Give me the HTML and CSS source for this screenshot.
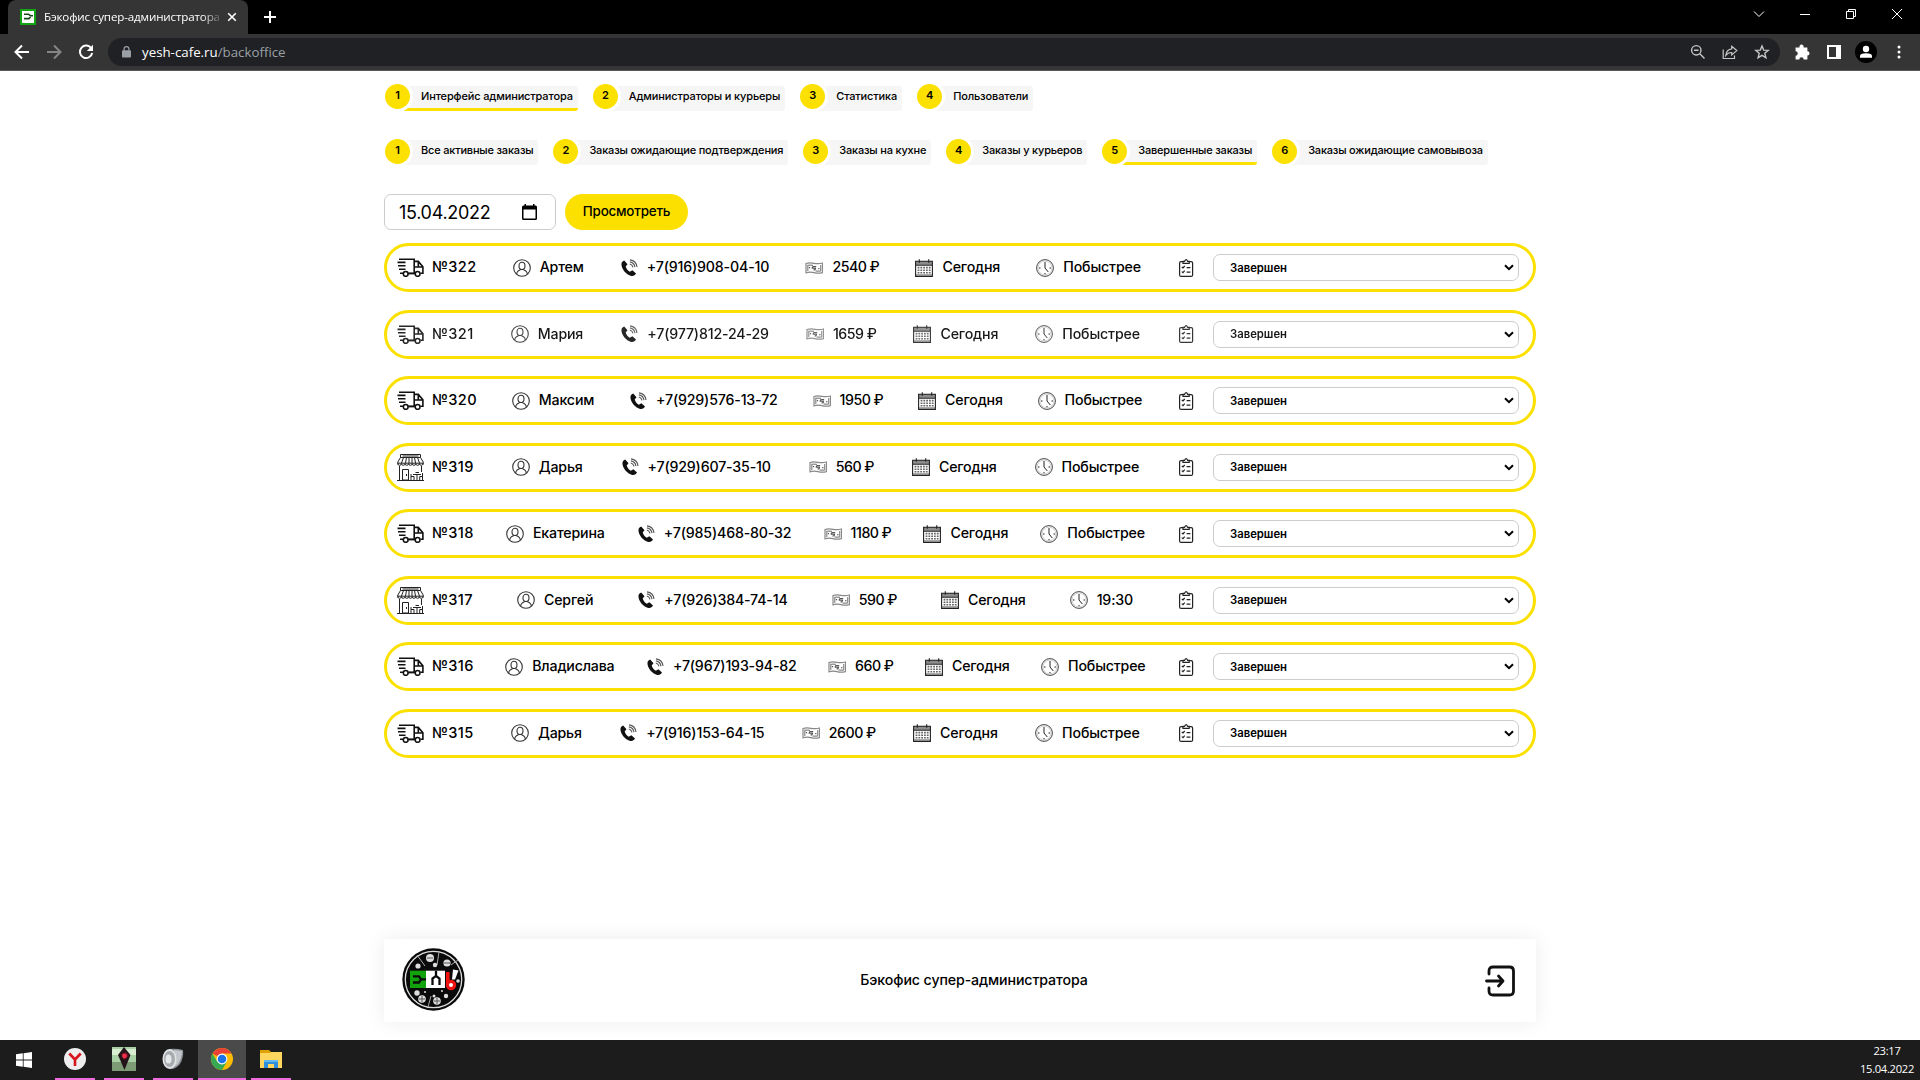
FILE: index.html
```html
<!DOCTYPE html>
<html lang="ru">
<head>
<meta charset="utf-8">
<title>Бэкофис супер-администратора</title>
<link rel="stylesheet" href="styles.css">
</head>
<body>
<svg class="sprite" aria-hidden="true">
  <symbol id="truck" viewBox="0 0 27 19"><g fill="none" stroke="#111" stroke-width="1.6"><path d="M2 1.2H17.2V15.2H11.5M6.5 15.2H3M17.2 3.4H21.3L25.9 8.8V15.2H23.5M17.2 15.2H17M17.6 9H25.5M21.3 3.5V8.8"/><path d="M0.5 4.4H8.5M1 7.8H8.5M2 11.2H8.5"/><circle cx="8.7" cy="15.9" r="2.4" fill="#fff"/><circle cx="20.6" cy="15.9" r="2.4" fill="#fff"/><path d="M11.2 15.6H18.2"/></g></symbol>
  <symbol id="shop" viewBox="0 0 27 27"><g fill="none" stroke="#222" stroke-width="1"><path d="M3.5 .5H23.5V3.5H3.5ZM3.5 3.5L.8 8V10.5M23.5 3.5L26.2 8V10.5M0 26.5H27M2.5 12V26M24.5 12V18M5.5 15.5H11.5V26H5.5ZM9.5 20V22M6.5 3.5L4.5 9M9.5 3.5L8.5 9M12 3.5V9M15 3.5V9M17.5 3.5L18.5 9M20.5 3.5L22.5 9M.8 9.2H26.2M5.5 2H21.5"/><path d="M.8 9.5a1.8 1.8 0 0 0 3.6 0a1.8 1.8 0 0 0 3.6 0a1.8 1.8 0 0 0 3.6 0a1.8 1.8 0 0 0 3.6 0a1.8 1.8 0 0 0 3.6 0a1.8 1.8 0 0 0 3.6 0a1.8 1.8 0 0 0 3.6 0"/><path d="M14 20V26M14 22.5H17V26M25.5 19V26M25.5 22.5H22.7V26M16 20.5H24M20 20.5V26M18.5 18.5H22"/></g></symbol>
  <symbol id="person" viewBox="0 0 18 18"><g fill="none" stroke="#333" stroke-width="1.1"><circle cx="9" cy="9" r="8.3"/><ellipse cx="9" cy="6.9" rx="3" ry="3.6"/><path d="M3.7 15C3.8 12.2 5.5 11.5 7.5 10.8M14.3 15C14.2 12.2 12.5 11.5 10.5 10.8"/></g></symbol>
  <symbol id="phone" viewBox="0 0 18 18"><path fill="#111" d="M4.2 1.6C2.2 2.3 1 4 1.6 6.7C2.7 11.2 6.2 15.2 10.5 16.7C13 17.4 15 16.6 16 14.5L12.4 11.2L9.8 12.8C7.6 11.6 6.3 9.8 5.7 7.6L7.5 5.2Z"/><path fill="none" stroke="#555" stroke-width="1.1" d="M9.8 5C11.6 5.4 12.6 6.5 13 8.3M9.9 2.9C12.7 3.4 14.5 5.2 15 8.1M10 .9C14 1.4 16.5 3.9 17 8"/></symbol>
  <symbol id="money" viewBox="0 0 18 12"><g fill="none" stroke="#888" stroke-width="1.2"><path d="M1 11.5V1.5Q4.5 .4 9 1.3T17.5 1V10.6Q13 11.8 9 10.6T1 10.8"/><path d="M2.8 9V3.3Q5 2.8 8 3.4M15.7 3V8.8Q13 9.4 10.5 8.8"/><path stroke="#555" d="M11.2 4.5H8.5Q7.3 4.5 7.3 6.2H10.5Q10.5 8 8.5 8M4.5 5V6.2M13.8 6V7.2"/></g></symbol>
  <symbol id="cal" viewBox="0 0 18 18"><path fill="#8c8c8c" d="M.6 2H17.4V6H.6Z"/><g fill="none" stroke="#222" stroke-width="1.1"><path d="M.6 2.2H17.4V17.4H.6ZM.6 6.3H17.4M4.3 .2V3.8M13.7 .2V3.8"/></g><path stroke="#666" stroke-width="1.6" stroke-dasharray="1.8 1" d="M2.6 8.6H15.6M2.6 11.2H15.6M2.6 13.8H15.6"/><path stroke="#555" stroke-width="1" d="M1 16H17"/></symbol>
  <symbol id="clock" viewBox="0 0 18 18"><g fill="none" stroke="#444" stroke-width="1"><circle cx="9" cy="9" r="8.4"/><circle cx="9" cy="9" r="7" stroke="#aaa" stroke-width=".6"/><path stroke="#222" d="M9 3V9L12.3 13M9 14V15.3M3 9H4.5M13.5 9H15"/></g></symbol>
  <symbol id="list" viewBox="0 0 18 18"><g fill="none" stroke="#222" stroke-width="1.2"><rect x="2.6" y="2.6" width="13" height="14.8" rx="1.5"/><path fill="#fff" d="M6 4.4V2.3H7.6Q9.1-.9 10.6 2.3H12.2V4.4Z"/><path d="M4.8 8L6 9L7.7 7M4.8 12.6L6 13.6L7.7 11.6M9.6 8.6H13.4M9.6 13.2H13.4"/></g></symbol>
</svg>

<header class="browser">
  <div class="tabs">
    <div class="tab">
      <svg class="favicon" viewBox="0 0 16 16"><path fill="#12a312" d="M0 0H16V16H0Z"/><path fill="#fff" d="M2 2H14V14H2Z"/><path fill="none" stroke="#164a16" stroke-width="1.6" d="M4 5.2H8.5L10.5 6.7H13M4 9.6H9L10.5 8"/></svg>
      <span class="tab-title">Бэкофис супер-администратора</span>
      <svg class="tab-close" viewBox="0 0 10 10"><path d="M1.2 1.2L8.8 8.8M8.8 1.2L1.2 8.8"/></svg>
    </div>
    <svg class="plus" viewBox="0 0 12 12"><path d="M6 0V12M0 6H12"/></svg>
    <div class="window-buttons">
      <svg viewBox="0 0 12 12"><path d="M1 3.5L6 8.5L11 3.5"/></svg>
      <svg viewBox="0 0 12 12"><path d="M1 6.5H11"/></svg>
      <svg viewBox="0 0 12 12"><path d="M1.5 3.5H8.5V10.5H1.5ZM3.5 3.5V1.5H10.5V8.5H8.5"/></svg>
      <svg viewBox="0 0 12 12"><path d="M1 1L11 11M11 1L1 11"/></svg>
    </div>
  </div>
  <div class="toolbar">
    <svg class="tool" viewBox="0 0 16 16"><path d="M15 8H2M8 1.5L1.5 8L8 14.5"/></svg>
    <svg class="tool dim" viewBox="0 0 16 16"><path d="M1 8H14M8 1.5L14.5 8L8 14.5"/></svg>
    <svg class="tool" viewBox="0 0 16 16"><path d="M13.4 4.5A6.2 6.2 0 1 0 14.2 9"/><path fill="#fff" stroke="none" d="M15 .8V7H8.8Z"/></svg>
    <div class="omnibox">
      <svg class="lock" viewBox="0 0 10 13"><path fill="#9aa0a6" d="M1 4.6H9Q10 4.6 10 5.6V11.6Q10 12.6 9 12.6H1Q0 12.6 0 11.6V5.6Q0 4.6 1 4.6Z"/><path fill="none" stroke="#9aa0a6" stroke-width="1.3" d="M2.3 5V3.3a2.7 2.7 0 0 1 5.4 0V5"/></svg>
      <span class="url">yesh-cafe.ru<i>/backoffice</i></span>
      <svg class="obi" viewBox="0 0 16 16"><circle cx="6.3" cy="6.3" r="4.7"/><path d="M9.8 9.8L14.5 14.5M4 6.3H8.6"/></svg>
      <svg class="obi" viewBox="0 0 16 16"><path stroke-width="1.2" d="M1.2 5.5V14.5H12.5V11.5M9.7 2.2L14.8 6.6L9.7 11V8.5Q6 8.3 3.8 11.3Q4.5 5.4 9.7 4.8Z"/></svg>
      <svg class="obi" viewBox="0 0 16 16"><path d="M8 2L9.7 6.1L14.2 6.4L10.8 9.3L11.9 13.7L8 11.3L4.1 13.7L5.2 9.3L1.8 6.4L6.3 6.1Z"/></svg>
    </div>
    <svg class="ext" viewBox="0 0 16 16"><path fill="#fff" d="M1.5 3.2H5.2A2 2 0 1 1 9 3.2H12.6V6.9A2 2 0 1 1 12.6 10.9V14.6H9.1A2 2 0 0 0 5 14.6H1.5V11A2 2 0 0 0 1.5 6.9Z"/></svg>
    <svg class="side" viewBox="0 0 14 14"><path fill="#fff" fill-rule="evenodd" d="M0 0H14V14H0ZM2 2V12H9V2Z"/></svg>
    <svg class="avatar" viewBox="0 0 22 22"><circle cx="11" cy="11" r="11"/><circle cx="11" cy="8" r="3.2" fill="#fff"/><path fill="#fff" d="M5 16.8V15Q5 12.3 11 12.3T17 15V16.8Z"/></svg>
    <svg class="dots" viewBox="0 0 4 14"><circle cx="2" cy="2" r="1.5"/><circle cx="2" cy="7" r="1.5"/><circle cx="2" cy="12" r="1.5"/></svg>
  </div>
</header>

<main class="page">
  <nav class="nav">
    <a class="step active"><b>1</b><span>Интерфейс администратора</span></a>
    <a class="step"><b>2</b><span>Администраторы и курьеры</span></a>
    <a class="step"><b>3</b><span>Статистика</span></a>
    <a class="step"><b>4</b><span>Пользователи</span></a>
  </nav>
  <nav class="nav second">
    <a class="step"><b>1</b><span>Все активные заказы</span></a>
    <a class="step"><b>2</b><span>Заказы ожидающие подтверждения</span></a>
    <a class="step"><b>3</b><span>Заказы на кухне</span></a>
    <a class="step"><b>4</b><span>Заказы у курьеров</span></a>
    <a class="step active"><b>5</b><span>Завершенные заказы</span></a>
    <a class="step"><b>6</b><span>Заказы ожидающие самовывоза</span></a>
  </nav>
  <div class="filter">
    <div class="date"><span>15.04.2022</span><svg viewBox="0 0 15 16"><path fill="#000" fill-rule="evenodd" d="M2.5 0H4V1.5H11V0H12.5V1.5H13.5Q15 1.5 15 3V14.5Q15 16 13.5 16H1.5Q0 16 0 14.5V3Q0 1.5 1.5 1.5H2.5ZM1.5 5.5V14.5H13.5V5.5Z"/></svg></div>
    <button class="view">Просмотреть</button>
  </div>
  <section class="orders">
    <article class="order"><div class="info">
      <div class="cell num"><svg class="truck"><use href="#truck"/></svg><span>№322</span></div>
      <div class="cell"><svg><use href="#person"/></svg><span>Артем</span></div>
      <div class="cell tel"><svg><use href="#phone"/></svg><span>+7(916)908-04-10</span></div>
      <div class="cell sum"><svg><use href="#money"/></svg><span>2540 ₽</span></div>
      <div class="cell"><svg><use href="#cal"/></svg><span>Сегодня</span></div>
      <div class="cell"><svg><use href="#clock"/></svg><span>Побыстрее</span></div>
      <div class="cell"><svg><use href="#list"/></svg></div></div>
      <div class="status"><span>Завершен</span><svg viewBox="0 0 10 7"><path d="M1 1.2L5 5.2L9 1.2"/></svg></div>
    </article>
    <article class="order soft"><div class="info">
      <div class="cell num"><svg class="truck"><use href="#truck"/></svg><span>№321</span></div>
      <div class="cell"><svg><use href="#person"/></svg><span>Мария</span></div>
      <div class="cell tel"><svg><use href="#phone"/></svg><span>+7(977)812-24-29</span></div>
      <div class="cell sum"><svg><use href="#money"/></svg><span>1659 ₽</span></div>
      <div class="cell"><svg><use href="#cal"/></svg><span>Сегодня</span></div>
      <div class="cell"><svg><use href="#clock"/></svg><span>Побыстрее</span></div>
      <div class="cell"><svg><use href="#list"/></svg></div></div>
      <div class="status"><span>Завершен</span><svg viewBox="0 0 10 7"><path d="M1 1.2L5 5.2L9 1.2"/></svg></div>
    </article>
    <article class="order"><div class="info">
      <div class="cell num"><svg class="truck"><use href="#truck"/></svg><span>№320</span></div>
      <div class="cell"><svg><use href="#person"/></svg><span>Максим</span></div>
      <div class="cell tel"><svg><use href="#phone"/></svg><span>+7(929)576-13-72</span></div>
      <div class="cell sum"><svg><use href="#money"/></svg><span>1950 ₽</span></div>
      <div class="cell"><svg><use href="#cal"/></svg><span>Сегодня</span></div>
      <div class="cell"><svg><use href="#clock"/></svg><span>Побыстрее</span></div>
      <div class="cell"><svg><use href="#list"/></svg></div></div>
      <div class="status"><span>Завершен</span><svg viewBox="0 0 10 7"><path d="M1 1.2L5 5.2L9 1.2"/></svg></div>
    </article>
    <article class="order"><div class="info">
      <div class="cell num"><svg class="shop"><use href="#shop"/></svg><span>№319</span></div>
      <div class="cell"><svg><use href="#person"/></svg><span>Дарья</span></div>
      <div class="cell tel"><svg><use href="#phone"/></svg><span>+7(929)607-35-10</span></div>
      <div class="cell sum"><svg><use href="#money"/></svg><span>560 ₽</span></div>
      <div class="cell"><svg><use href="#cal"/></svg><span>Сегодня</span></div>
      <div class="cell"><svg><use href="#clock"/></svg><span>Побыстрее</span></div>
      <div class="cell"><svg><use href="#list"/></svg></div></div>
      <div class="status"><span>Завершен</span><svg viewBox="0 0 10 7"><path d="M1 1.2L5 5.2L9 1.2"/></svg></div>
    </article>
    <article class="order"><div class="info">
      <div class="cell num"><svg class="truck"><use href="#truck"/></svg><span>№318</span></div>
      <div class="cell"><svg><use href="#person"/></svg><span>Екатерина</span></div>
      <div class="cell tel"><svg><use href="#phone"/></svg><span>+7(985)468-80-32</span></div>
      <div class="cell sum"><svg><use href="#money"/></svg><span>1180 ₽</span></div>
      <div class="cell"><svg><use href="#cal"/></svg><span>Сегодня</span></div>
      <div class="cell"><svg><use href="#clock"/></svg><span>Побыстрее</span></div>
      <div class="cell"><svg><use href="#list"/></svg></div></div>
      <div class="status"><span>Завершен</span><svg viewBox="0 0 10 7"><path d="M1 1.2L5 5.2L9 1.2"/></svg></div>
    </article>
    <article class="order"><div class="info">
      <div class="cell num"><svg class="shop"><use href="#shop"/></svg><span>№317</span></div>
      <div class="cell"><svg><use href="#person"/></svg><span>Сергей</span></div>
      <div class="cell tel"><svg><use href="#phone"/></svg><span>+7(926)384-74-14</span></div>
      <div class="cell sum"><svg><use href="#money"/></svg><span>590 ₽</span></div>
      <div class="cell"><svg><use href="#cal"/></svg><span>Сегодня</span></div>
      <div class="cell"><svg><use href="#clock"/></svg><span>19:30</span></div>
      <div class="cell"><svg><use href="#list"/></svg></div></div>
      <div class="status"><span>Завершен</span><svg viewBox="0 0 10 7"><path d="M1 1.2L5 5.2L9 1.2"/></svg></div>
    </article>
    <article class="order"><div class="info">
      <div class="cell num"><svg class="truck"><use href="#truck"/></svg><span>№316</span></div>
      <div class="cell"><svg><use href="#person"/></svg><span>Владислава</span></div>
      <div class="cell tel"><svg><use href="#phone"/></svg><span>+7(967)193-94-82</span></div>
      <div class="cell sum"><svg><use href="#money"/></svg><span>660 ₽</span></div>
      <div class="cell"><svg><use href="#cal"/></svg><span>Сегодня</span></div>
      <div class="cell"><svg><use href="#clock"/></svg><span>Побыстрее</span></div>
      <div class="cell"><svg><use href="#list"/></svg></div></div>
      <div class="status"><span>Завершен</span><svg viewBox="0 0 10 7"><path d="M1 1.2L5 5.2L9 1.2"/></svg></div>
    </article>
    <article class="order"><div class="info">
      <div class="cell num"><svg class="truck"><use href="#truck"/></svg><span>№315</span></div>
      <div class="cell"><svg><use href="#person"/></svg><span>Дарья</span></div>
      <div class="cell tel"><svg><use href="#phone"/></svg><span>+7(916)153-64-15</span></div>
      <div class="cell sum"><svg><use href="#money"/></svg><span>2600 ₽</span></div>
      <div class="cell"><svg><use href="#cal"/></svg><span>Сегодня</span></div>
      <div class="cell"><svg><use href="#clock"/></svg><span>Побыстрее</span></div>
      <div class="cell"><svg><use href="#list"/></svg></div></div>
      <div class="status"><span>Завершен</span><svg viewBox="0 0 10 7"><path d="M1 1.2L5 5.2L9 1.2"/></svg></div>
    </article>
  </section>
  <footer class="card">
    <svg class="logo" viewBox="0 0 63 63"><circle cx="31.5" cy="31.5" r="31.2" fill="#0a0a0a"/><circle cx="31.5" cy="31.5" r="28.2" fill="none" stroke="#ddd" stroke-width="1.3"/>
      <g stroke="#aaa" stroke-width="1"><path d="M15 7L23 18M37 4L35 17M29 48L26 59M49 17L56 12"/></g>
      <g fill="#ddd"><circle cx="28" cy="10" r="4"/><circle cx="45" cy="15" r="3.6"/><circle cx="16" cy="18" r="2.6"/><circle cx="33" cy="17" r="2.2"/><circle cx="20" cy="51" r="3.8"/><circle cx="35" cy="53" r="3.8"/><circle cx="15" cy="45" r="2.7"/><circle cx="32" cy="48" r="1.5"/><circle cx="44" cy="48" r="2.2"/><circle cx="56" cy="33" r="1.8"/><circle cx="23" cy="44" r="1"/><circle cx="40" cy="43" r="1"/></g>
      <g stroke="#555" stroke-width="1"><path d="M25 10H31M42 15H48M17 51H23M32 53H38M35 50V56M20 48V54"/></g>
      <path fill="#12a30c" d="M8 22.7H24V40H8Z"/><path fill="#fff" d="M24 22.7H43V40H24Z"/>
      <path fill="none" stroke="#0a0a0a" stroke-width="2.3" d="M11 28.3H17L19 31.4H24M11 34.5H17L19 31.4M30.5 37V30.5L34 28V22.7M37.5 37V30.5L34 28"/>
      <g fill="none" stroke="#f11212"><path stroke-width="3.6" d="M45.8 24V37"/><circle cx="49" cy="37" r="3.6" stroke-width="3.2" fill="#fff"/></g>
      <path fill="#fff" d="M51 21.5L56.5 22.5L53 31.5H50Z"/></svg>
    <span class="card-title">Бэкофис супер-администратора</span>
    <svg class="exit" viewBox="0 0 30 32"><g fill="none" stroke="#111" stroke-width="2.8" stroke-linecap="round" stroke-linejoin="round"><path d="M4 9V6Q4 2 8 2H24.5Q28.5 2 28.5 6V26Q28.5 30 24.5 30H8Q4 30 4 26V23"/><path d="M1.5 16H17.5M13.5 11L18 16L13.5 21"/></g></svg>
  </footer>
</main>

<footer class="taskbar">
  <div class="app start"><svg viewBox="0 0 16 16"><path fill="#fff" d="M0 2.3L6.8 1.3V7.6H0ZM7.6 1.2L16 0V7.6H7.6ZM0 8.4H6.8V14.7L0 13.7ZM7.6 8.4H16V16L7.6 14.8Z"/></svg></div>
  <div class="app run"><svg viewBox="0 0 22 22"><circle cx="11" cy="11" r="11" fill="#eee"/><path fill="none" stroke="#d8141c" stroke-width="2.6" d="M5.3 5.5L11 11.5L16.7 5.5M11 11V18"/></svg></div>
  <div class="app run"><svg class="big" viewBox="0 0 24 24"><path fill="#a9cfa4" d="M0 0H24V24H0Z"/><path fill="#7d9c76" d="M0 15H24V24H0Z"/><path fill="#d8ecd0" d="M0 2H24V8H0Z"/><path fill="#24141a" d="M12 0L18.5 8L12.5 23L6 8Z"/><path fill="#6c1020" d="M9 7L14 5L17 9L12 13Z"/><circle cx="12.5" cy="9" r="2.4" fill="#f0304a"/></svg></div>
  <div class="app run"><svg viewBox="0 0 22 22"><path fill="#8c9095" d="M7 1Q14 0 21 2Q22 9 18 16Q13 22 8 21Z"/><path fill="#c3c6ca" d="M12 2L20 3Q20 10 16 16L11 20Z"/><ellipse cx="7.5" cy="11" rx="7" ry="10" fill="#e2e4e6"/><ellipse cx="7.5" cy="11" rx="5.5" ry="8" fill="#a7abb0"/><ellipse cx="6.5" cy="11" rx="3" ry="4.6" fill="#e6e8ea"/></svg></div>
  <div class="app run chrome"><svg viewBox="0 0 22 22"><circle cx="11" cy="11" r="11" fill="#fbbc05"/><path fill="#ea4335" d="M11 11L1.5 5.5A11 11 0 0 1 20.5 5.5H11Z"/><path fill="#34a853" d="M1.5 5.5A11 11 0 0 0 11 22L15.8 13.7L11 11L6.2 13.7Z"/><circle cx="11" cy="11" r="5.4" fill="#fff"/><circle cx="11" cy="11" r="4.3" fill="#1a73e8"/></svg></div>
  <div class="app run files"><svg viewBox="0 0 22 18"><path fill="#e0a106" d="M0 0H9L11 2V8H0Z"/><path fill="#ffd75e" d="M0 3H10L11 2H22V18H0Z"/><path fill="#2d8fdb" d="M4 10H18V18H14V14H8V18H4Z"/><path fill="#63b8ee" d="M4 10H18V12H4Z"/></svg></div>
  <div class="tray"><span>23:17</span><span>15.04.2022</span></div>
</footer>
</body>
</html>
```
FILE: styles.css
```css
* { box-sizing: border-box; }
body { margin: 0; width: 1920px; height: 1080px; overflow: hidden; display: flex; flex-direction: column; background: #fff; color: #000; font-family: Inter, "Noto Sans", sans-serif; font-weight: 500; }
.sprite { display: none; }
svg { display: block; flex: none; }

.browser { height: 71px; font-family: "Open Sans", "Noto Sans", sans-serif; font-size: 12px; font-weight: 400; color: #fff; background: #353535; border-bottom: 1px solid #5a5a5a; }
.tabs { height: 34px; background: #000; display: flex; align-items: center; padding-left: 8px; }
.tab { width: 240px; height: 34px; padding: 0 11px 0 12px; background: #353535; border-radius: 8px 8px 0 0; display: flex; align-items: center; }
.favicon { width: 16px; height: 16px; }
.tab-title { width: 178px; margin-left: 8px; padding-bottom: 1px; font-size: 11.6px; letter-spacing: -.15px; white-space: nowrap; mask-image: linear-gradient(90deg, #000 158px, transparent 180px); }
.tab-close { width: 10px; height: 10px; margin-left: 6px; fill: none; stroke: #fff; stroke-width: 1.6; }
.plus { width: 12px; height: 12px; margin-left: 16px; fill: none; stroke: #fff; stroke-width: 2; }
.window-buttons { margin-left: auto; padding-right: 17px; margin-top: -6px; display: flex; gap: 34px; }
.window-buttons svg { width: 12px; height: 12px; fill: none; stroke: #fff; stroke-width: 1; }
.toolbar { height: 36px; display: flex; align-items: center; padding-left: 14px; }
.tool { width: 16px; height: 16px; margin-right: 16px; fill: none; stroke: #fff; stroke-width: 2; }
.dim { stroke: #858585; }
.omnibox { width: 1672px; height: 28px; margin-left: -2px; padding: 0 10px 0 14px; border-radius: 14px; background: #202124; display: flex; align-items: center; }
.lock { width: 9px; height: 12px; }
.url { margin: 0 auto 0 11px; font-size: 13.3px; }
.url i { font-style: normal; color: #9aa0a6; }
.obi { width: 16px; height: 16px; margin-left: 16px; fill: none; stroke: #c4c7c5; stroke-width: 1.4; }
.ext { width: 17px; height: 17px; margin-left: 14px; }
.side { width: 14px; height: 14px; margin-left: 16px; }
.avatar { width: 22px; height: 22px; margin-left: 14px; }
.dots { width: 4px; height: 14px; margin-left: 20px; fill: #fff; }

.page { width: 1152px; height: 969px; margin: 0 auto; display: flex; flex-direction: column; }
.nav { display: flex; gap: 15px; margin-top: 13px; padding-left: 1px; height: 27px; letter-spacing: -.14px; }
.second { margin-top: 28px; letter-spacing: -.19px; }
.step { display: flex; height: 25px; margin-top: 2px; padding-right: 5px; border-radius: 3px; background: linear-gradient(90deg, #fff 14px, #f6f6f6 14px); font-size: 11px; line-height: 18px; white-space: nowrap; }
.step.active { background: linear-gradient(#fbe000, #fbe000) 19px 22px / 100% 3px no-repeat, linear-gradient(90deg, #fff 14px, #f6f6f6 14px); }
.step b { width: 25px; height: 25px; margin: -2px 11px 0 0; border-radius: 50%; background: #fbe000; box-shadow: 0 0 0 3px #fff; text-align: center; line-height: 23px; font-weight: 600; }
.step span { padding-top: 1px; }
.second .step { margin-top: 1px; }
.second .step b { margin-top: -1px; line-height: 22px; }

.filter { display: flex; gap: 9px; margin-top: 28px; height: 36px; }
.date { width: 172px; border: 1px solid #ccc; border-radius: 7px; padding: 0 18px 0 14px; display: flex; align-items: center; justify-content: space-between; font-size: 18px; font-weight: 400; letter-spacing: -.3px; }
.date svg { width: 15px; height: 16px; }
.view { width: 123px; border: 0; border-radius: 18px; padding: 0 0 2px; background: #fbe000; font: 500 13.4px Inter, sans-serif; letter-spacing: -.2px; color: #000; }

.orders { display: flex; flex-direction: column; gap: 17.57px; margin-top: 13px; }
.order { height: 49px; border: 3px solid #fbe000; border-radius: 25px; padding: 0 14px 0 10px; display: flex; align-items: center; gap: 18px; font-size: 14.2px; letter-spacing: -.17px; }
.info { flex: 1; display: flex; justify-content: space-between; align-items: center; white-space: nowrap; }
.cell { display: flex; align-items: center; gap: 9px; height: 27px; }
.cell span { padding-bottom: 2px; }
.cell svg { width: 18px; height: 18px; }
.cell .truck { width: 27px; height: 19px; }
.cell .shop { width: 27px; height: 27px; }
.num { font-size: 14.6px; letter-spacing: .35px; gap: 8px; }
.num span { padding-bottom: 1px; }
.sum { letter-spacing: -.45px; word-spacing: -.3px; }
.soft .info, .soft .status span { opacity: .9; }
.status { width: 306px; height: 27px; border: 1px solid #ccc; border-radius: 7px; padding: 0 4px 0 16px; display: flex; align-items: center; justify-content: space-between; font-size: 11.3px; font-weight: 600; letter-spacing: 0; }
.status svg { width: 10px; height: 7px; fill: none; stroke: #000; stroke-width: 2; }

.card { margin-top: auto; margin-bottom: 18px; height: 83px; padding: 0 21px 2px 18px; display: flex; align-items: center; justify-content: space-between; box-shadow: 0 0 20px rgba(0, 0, 30, .08); font-size: 14.2px; letter-spacing: -.11px; }
.card-title { padding-right: 2px; }
.logo { width: 63px; height: 63px; }
.exit { width: 30px; height: 32px; margin-top: 2px; }

.taskbar { height: 40px; background: #1c1c1c; display: flex; color: #fff; font: 400 11.2px "Open Sans", "Noto Sans", sans-serif; letter-spacing: -.3px; }
.app { width: 40px; margin-right: 9px; height: 40px; display: flex; align-items: center; justify-content: center; }
.app svg { width: 22px; height: 22px; }
.app .big { width: 24px; height: 24px; }
.app.start { width: 48px; margin-right: 7px; }
.app.start svg { width: 16px; height: 16px; }
.run { border-bottom: 2px solid #f06bdd; }
.app.chrome { width: 48px; margin: 0 5px 0 -4px; background: #4a4a4a; }
.app.files svg { height: 18px; }
.tray { margin-left: auto; padding: 2px 6px 0 0; display: flex; flex-direction: column; align-items: center; line-height: 18px; }
```
